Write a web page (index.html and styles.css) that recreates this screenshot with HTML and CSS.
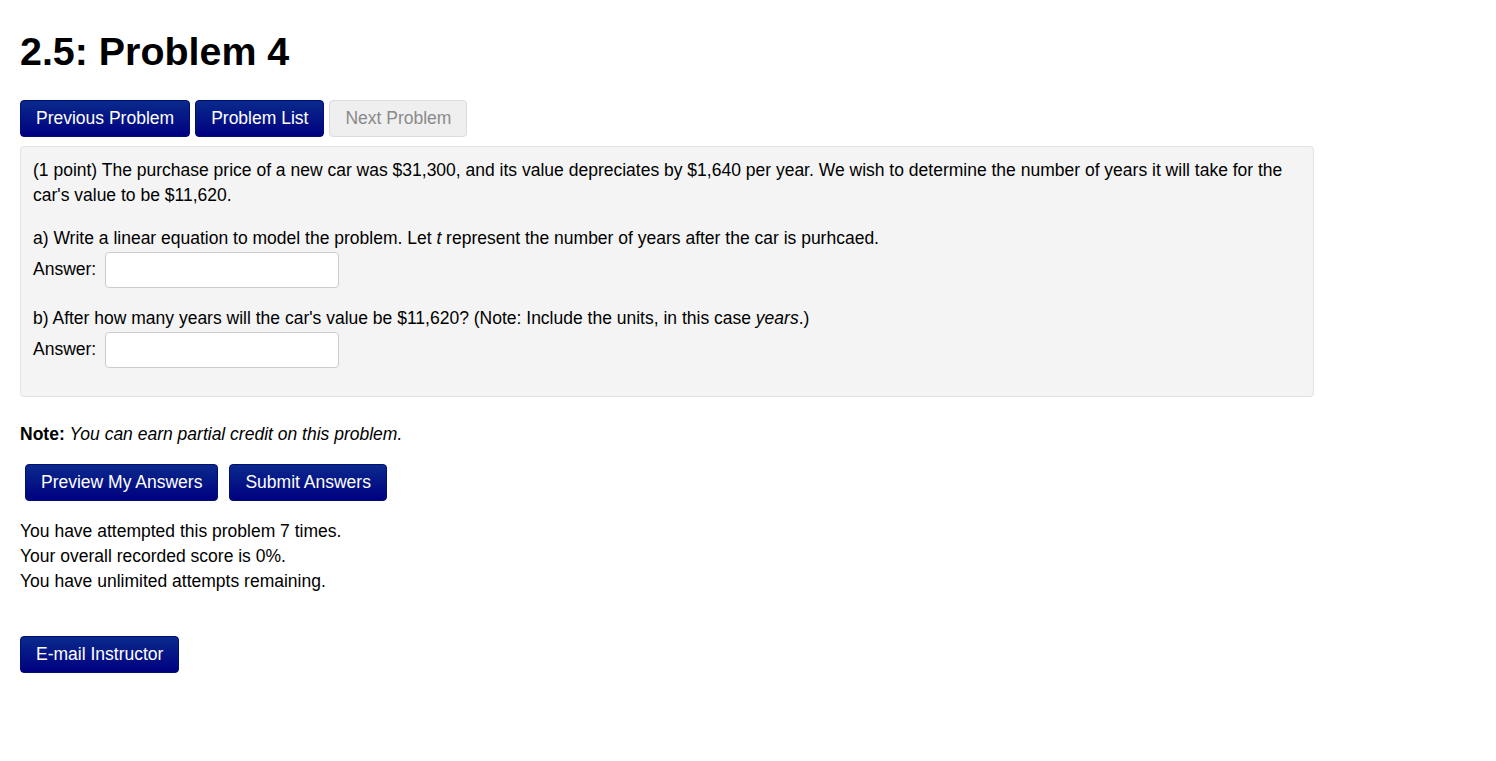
FILE: index.html
```html
<!DOCTYPE html>
<html lang="en">
<head>
<meta charset="utf-8">
<title>2.5: Problem 4</title>
<link rel="stylesheet" href="styles.css">
</head>
<body>
<main class="page">
  <h1 class="title">2.5: Problem 4</h1>
  <nav class="nav-row">
    <button class="btn btn-primary">Previous Problem</button>
    <button class="btn btn-primary">Problem List</button>
    <button class="btn btn-disabled" disabled>Next Problem</button>
  </nav>
  <section class="problem">
    <p class="intro">(1 point) The purchase price of a new car was $31,300, and its value depreciates by $1,640 per year. We wish to determine the number of years it will take for the car's value to be $11,620.</p>
    <div class="part">
      <div class="part-text">a) Write a linear equation to model the problem. Let <i>t</i> represent the number of years after the car is purhcaed.</div>
      <div class="answer-row"><span class="answer-label">Answer:</span><input class="answer-input" type="text"></div>
    </div>
    <div class="part">
      <div class="part-text">b) After how many years will the car's value be $11,620? (Note: Include the units, in this case <i>years</i>.)</div>
      <div class="answer-row"><span class="answer-label">Answer:</span><input class="answer-input" type="text"></div>
    </div>
  </section>
  <p class="note"><b>Note:</b> <i>You can earn partial credit on this problem.</i></p>
  <div class="submit-row">
    <button class="btn btn-primary">Preview My Answers</button>
    <button class="btn btn-primary">Submit Answers</button>
  </div>
  <div class="status">
    <div>You have attempted this problem 7 times.</div>
    <div>Your overall recorded score is 0%.</div>
    <div>You have unlimited attempts remaining.</div>
  </div>
  <div class="email-row">
    <button class="btn btn-primary">E-mail Instructor</button>
  </div>
</main>
</body>
</html>
```

FILE: styles.css
```css
html, body {
  margin: 0;
  padding: 0;
  background: #fff;
}

body {
  font-family: "Liberation Sans", Arial, sans-serif;
  font-size: 17.5px;
  line-height: 25px;
  color: #000;
}

.page {
  padding: 0 20px;
}

.title {
  margin: 0;
  padding-top: 29px;
  font-size: 39.4px;
  line-height: 44px;
  font-weight: bold;
  color: #000;
  height: 44px;
}

.nav-row {
  display: flex;
  gap: 5px;
  margin-top: 27px;
}

.btn {
  font-family: "Liberation Sans", Arial, sans-serif;
  font-size: 17.5px;
  line-height: 25px;
  padding: 5px 15px;
  border-radius: 4px;
  border: 1px solid transparent;
  height: 37px;
  box-sizing: border-box;
  cursor: pointer;
  margin: 0;
}

.btn-primary {
  color: #fff;
  background-color: #000c88;
  background-image: linear-gradient(to bottom, #0a2a8c, #000080);
  border-color: #00106e;
}

.btn-disabled {
  color: #8a8a8a;
  background: #efefef;
  border-color: #dcdcdc;
  cursor: default;
}

.problem {
  width: 1294px;
  box-sizing: border-box;
  margin-top: 9px;
  background: #f4f4f4;
  border: 1px solid #e3e3e3;
  border-radius: 4px;
  padding: 11px 12px 28px 12px;
}

.intro {
  margin: 0;
}

.part {
  margin-top: 18px;
}

.answer-row {
  display: flex;
  align-items: center;
  height: 37px;
}

.answer-label {
  margin-right: 9px;
}

.answer-input {
  width: 234px;
  height: 36px;
  box-sizing: border-box;
  border: 1px solid #cccccc;
  border-radius: 4px;
  background: #fff;
  margin: 0;
  padding: 4px 6px;
  font-family: "Liberation Sans", Arial, sans-serif;
  font-size: 17.5px;
}

.note {
  margin: 25px 0 0 0;
}

.submit-row {
  display: flex;
  gap: 11px;
  margin-top: 17px;
  padding-left: 5px;
}

.status {
  margin-top: 18px;
}

.email-row {
  margin-top: 42px;
}
```
